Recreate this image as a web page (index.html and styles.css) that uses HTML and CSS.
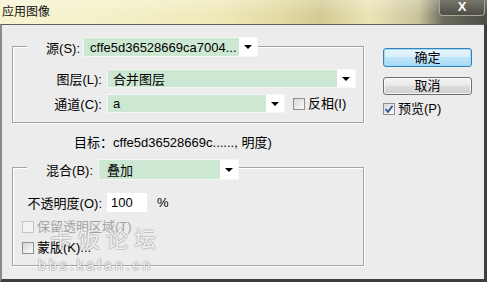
FILE: index.html
```html
<!DOCTYPE html>
<html lang="zh-CN">

<head>
  <meta charset="UTF-8" />
  <title>应用图像</title>
  <link rel="stylesheet" href="styles.css">
</head>

<body>
  <div class="window">
    <!--标题栏-->
    <div class="titlebar">
      <span class="title">应用图像</span>
      <span class="close">X</span>
    </div>
    <div class="client">
      <div class="main">
        <!--源-->
        <div class="group group-source">
          <div class="group-head">
            <span class="lbl lbl-source">源(S):</span>
            <div class="combo combo-source">
              <span class="combo-value">cffe5d36528669ca7004...</span><span class="combo-arrow"></span>
            </div>
          </div>
          <div class="row row-layer">
            <span class="lbl">图层(L):</span>
            <div class="combo combo-layer">
              <span class="combo-value">合并图层</span><span class="combo-arrow"></span>
            </div>
          </div>
          <div class="row row-channel">
            <span class="lbl">通道(C):</span>
            <div class="combo combo-channel">
              <span class="combo-value">a</span><span class="combo-arrow"></span>
            </div>
            <label class="check check-invert"><span class="box"></span>反相(I)</label>
          </div>
        </div>
        <div class="target">目标：cffe5d36528669c......, 明度)</div>
        <!--混合-->
        <div class="group group-blend">
          <div class="group-head">
            <span class="lbl lbl-blend">混合(B):</span>
            <div class="combo combo-blend">
              <span class="combo-value">叠加</span><span class="combo-arrow"></span>
            </div>
          </div>
          <div class="row row-opacity">
            <span class="lbl">不透明度(O):</span>
            <span class="field">100</span>
            <span class="unit">%</span>
          </div>
          <label class="check check-row disabled"><span class="box"></span>保留透明区域(T)</label>
          <label class="check check-row check-mask"><span class="box"></span>蒙版(K)...</label>
        </div>
      </div>
      <div class="side">
        <div class="btn btn-default">确定</div>
        <div class="btn">取消</div>
        <label class="check check-preview">
          <span class="box checked">
            <svg width="10" height="10" viewBox="0 0 10 10"><path d="M1.5 5.2 L4 7.8 L8.6 1.8" fill="none" stroke="#2a4f9c" stroke-width="1.8"/></svg>
          </span>预览(P)
        </label>
      </div>
    </div>
    <!--水印-->
    <div class="watermark">
      <div class="wm-big">卡饭论坛</div>
      <div class="wm-small">bbs.kafan.cn</div>
    </div>
  </div>
</body>

</html>
```

FILE: styles.css
```css
* {
  padding: 0;
  margin: 0;
  box-sizing: border-box;
}

body {
  width: 487px;
  height: 282px;
  overflow: hidden;
  font-family: "Liberation Sans", "Noto Sans CJK SC", sans-serif;
  font-size: 13px;
  color: #000;
}

.window {
  width: 487px;
  height: 282px;
  position: relative;
  display: flex;
  flex-direction: column;
}

/* 标题栏 */
.titlebar {
  height: 24px;
  display: flex;
  align-items: flex-start;
  background:
    linear-gradient(rgba(255, 255, 255, 0.25), rgba(255, 255, 255, 0) 60%),
    linear-gradient(to right, #f6f3d2 0%, #f4f0c6 25%, #efe9b9 45%, #e2d9a2 58%, #d3ca93 66%, #ebe4b6 76%, #c9c39a 86%, #6c6b5e 91%, #4c4c46 100%);
}

.title {
  font-size: 12px;
  line-height: 14px;
  padding: 5px 0 0 2px;
  color: #111;
}

.close {
  margin-left: auto;
  margin-right: 2px;
  width: 46px;
  height: 16px;
  border: 1px solid #a9a79a;
  border-top: 0;
  border-radius: 0 0 4px 4px;
  background: linear-gradient(#77766b, #4e4d46);
  color: #fff;
  font-weight: bold;
  font-size: 13px;
  line-height: 14px;
  text-align: center;
}

.client {
  flex: 1;
  display: flex;
  background: #ececec;
  border-top: 1px solid #5e5e5e;
  border-left: 2px solid #8a8a8a;
  border-right: 3px solid #3f3f3f;
  border-bottom: 3px solid #3f3f3f;
  padding-top: 21px;
}

.main {
  width: 362px;
  padding-left: 10px;
}

/* 分组框 */
.group {
  width: 352px;
  border: 1px solid #a3a3a3;
  box-shadow: inset 1px 1px 0 #fff, 1px 1px 0 #fff;
}

.group-head {
  display: flex;
  align-items: center;
  width: fit-content;
  margin-left: 14px;
  background: #ececec;
}

.group-source {
  padding-bottom: 9px;
}

.group-source .group-head {
  margin-top: -10px;
  height: 20px;
}

.group-blend {
  margin-top: 16px;
  padding-bottom: 9px;
}

.group-blend .group-head {
  margin-top: -9px;
  height: 21px;
}

.lbl {
  width: 89px;
  text-align: right;
  margin-right: 5px;
  white-space: nowrap;
}

.lbl-source {
  width: 53px;
  margin-right: 3px;
}

.lbl-blend {
  width: 66px;
}

.row {
  display: flex;
  align-items: center;
  height: 19px;
}

.row-layer {
  margin-top: 12px;
}

.row-channel {
  margin-top: 6px;
}

.row-opacity {
  margin-top: 13px;
}

/* 下拉框 */
.combo {
  display: flex;
  height: 100%;
  border: 1px solid #f6f6f6;
}

.combo-value {
  flex: 1;
  background: #cde8d2;
  padding-left: 5px;
  display: flex;
  align-items: center;
  white-space: nowrap;
  overflow: hidden;
}

.combo-arrow {
  width: 18px;
  background: #fff;
  position: relative;
}

.combo-arrow::after {
  content: "";
  position: absolute;
  left: 5px;
  top: 50%;
  margin-top: -2px;
  border-left: 4px solid transparent;
  border-right: 4px solid transparent;
  border-top: 4px solid #000;
}

.combo-source {
  width: 175px;
}

.combo-source .combo-value {
  padding-left: 6px;
}

.combo-layer {
  width: 249px;
}

.combo-channel {
  width: 178px;
}

.combo-blend {
  width: 141px;
}

.combo-blend .combo-value {
  padding-left: 8px;
}

.field {
  width: 40px;
  height: 19px;
  background: #fff;
  padding-left: 4px;
  line-height: 19px;
}

.unit {
  margin-left: 10px;
}

.target {
  margin-top: 12px;
  padding-left: 62px;
  line-height: 16px;
  white-space: nowrap;
}

/* 复选框 */
.check {
  display: flex;
  align-items: center;
  line-height: 16px;
  white-space: nowrap;
}

.box {
  width: 12px;
  height: 12px;
  border: 1px solid #8e8f8f;
  background: linear-gradient(135deg, #d6d6d6, #fbfbfb);
  margin-right: 3px;
  display: flex;
  align-items: center;
  justify-content: center;
}

.check-invert {
  margin-left: 8px;
}

.check-row {
  padding-left: 9px;
  height: 16px;
}

.disabled {
  margin-top: 7px;
  color: #a3a3a3;
}

.disabled .box {
  border-color: #c4c4c4;
  background: #f3f3f3;
}

.check-mask {
  margin-top: 5px;
}

/* 右侧按钮 */
.side {
  margin-left: 19px;
  width: 89px;
}

.btn {
  height: 18px;
  border: 1px solid #707070;
  border-radius: 3px;
  background: linear-gradient(#f3f3f3 0%, #ebebeb 45%, #dddddd 50%, #cfcfcf 100%);
  box-shadow: inset 0 0 0 1px rgba(255, 255, 255, 0.7);
  text-align: center;
  line-height: 16px;
  margin-top: 10px;
}

.btn-default {
  margin-top: 2px;
  height: 19px;
  line-height: 17px;
  border-color: #3c7fb1;
  background: linear-gradient(#e9f5fc 0%, #d9effb 45%, #bee4f8 50%, #a8d9f3 100%);
  box-shadow: inset 0 0 0 1px #97dcf8;
}

.check-preview {
  margin-top: 6px;
}

/* 水印 */
.watermark {
  position: absolute;
  left: 40px;
  top: 226px;
  color: rgba(255, 255, 255, 0.85);
  text-shadow: 1px 0 0 rgba(150, 150, 150, 0.45), -1px 0 0 rgba(150, 150, 150, 0.45), 0 1px 0 rgba(150, 150, 150, 0.45), 0 -1px 0 rgba(150, 150, 150, 0.45);
  pointer-events: none;
}

.wm-big {
  font-size: 22px;
  line-height: 28px;
  letter-spacing: 6px;
  padding-left: 10px;
}

.wm-small {
  font-size: 14px;
  line-height: 16px;
  letter-spacing: 3px;
  margin-top: 3px;
  margin-left: -2px;
}
```
